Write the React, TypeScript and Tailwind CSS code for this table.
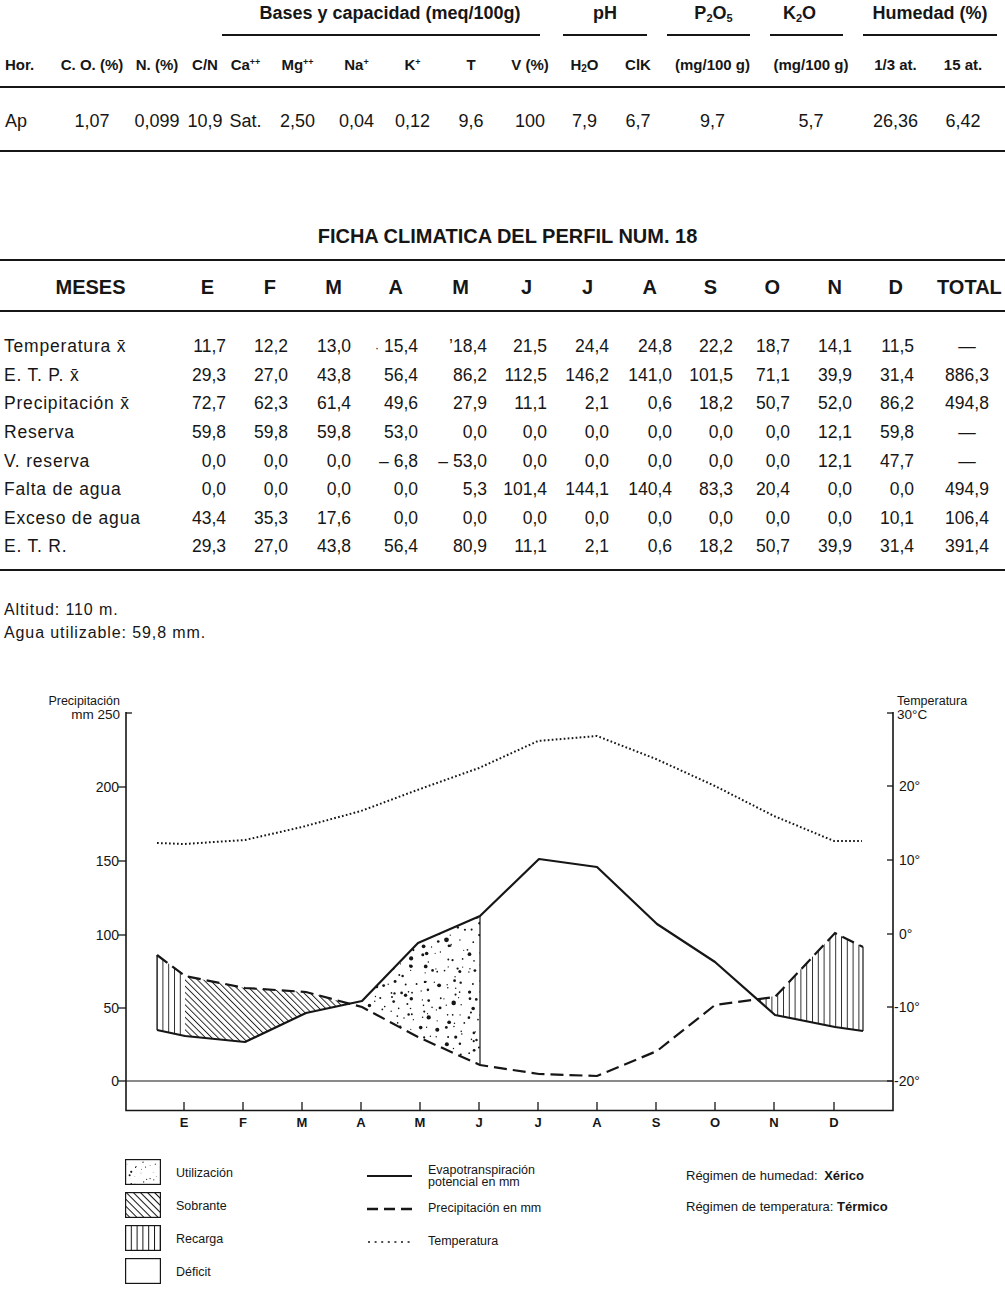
import React from "react";

type Pt = [number, number];

const ink = "#161616";
const pts = (a: Pt[]) => a.map((p) => p.join(",")).join(" ");

// chart traces, in page pixels (the svg viewBox starts at y=690)
const etp: Pt[] = [
  [157, 1031], [185, 1037], [245, 1043], [306, 1014], [362, 1002], [418, 944], [480, 917],
  [539, 860], [597, 868], [657, 925], [715, 963], [775, 1016], [835, 1028], [863, 1032],
];
const pre: Pt[] = [
  [157, 956], [185, 977], [245, 989], [306, 993], [362, 1008], [418, 1038], [480, 1066],
  [539, 1075], [597, 1077], [657, 1052], [715, 1006], [775, 998], [835, 934], [863, 948],
];
const temp: Pt[] = [
  [157, 844], [184, 845], [245, 841], [302, 828], [361, 812], [420, 790], [479, 769],
  [538, 742], [597, 737], [656, 760], [715, 787], [774, 817], [834, 842], [862, 842],
];

const usoArea: Pt[] = [[350, 1005], [362, 1002], [418, 944], [480, 917], [480, 1066], [418, 1038], [362, 1008]];
const sobranteArea: Pt[] = [[185, 977], [245, 989], [306, 993], [350, 1005], [306, 1014], [245, 1043], [185, 1037]];
const recargaIzq: Pt[] = [[157, 956], [185, 977], [185, 1037], [157, 1031]];
const recargaDer: Pt[] = [[757, 1000], [775, 997], [835, 934], [863, 948], [863, 1032], [835, 1028], [775, 1016]];

const months = ["E", "F", "M", "A", "M", "J", "J", "A", "S", "O", "N", "D"];
const tickX = [184, 243, 302, 361, 420, 479, 538, 597, 656, 715, 774, 834];

function jitterDots(x0: number, y0: number, x1: number, y1: number, step: number, seed: number) {
  let s = seed;
  const rnd = () => {
    s = (s * 16807) % 2147483647;
    return s / 2147483647;
  };
  const out: { x: number; y: number; r: number }[] = [];
  for (let y = y0; y < y1; y += step)
    for (let x = x0; x < x1; x += step)
      out.push({ x: x + rnd() * step, y: y + rnd() * step, r: 0.6 + rnd() * rnd() * 1.9 });
  return out;
}

const usoDots = jitterDots(346, 914, 482, 1068, 8, 4242);
const swatchDots = jitterDots(2, 2, 34, 24, 6, 977);

const soilGrid =
  "grid grid-cols-[56px_72px_58px_38px_43px_61px_57px_55px_62px_56px_53px_54px_95px_102px_67px_68px]";

const soilHeads: React.ReactNode[] = [
  "Hor.",
  "C. O. (%)",
  "N. (%)",
  "C/N",
  <>Ca<sup className="text-[9px]">++</sup></>,
  <>Mg<sup className="text-[9px]">++</sup></>,
  <>Na<sup className="text-[9px]">+</sup></>,
  <>K<sup className="text-[9px]">+</sup></>,
  "T",
  "V (%)",
  <>H<sub className="text-[10px]">2</sub>O</>,
  "ClK",
  "(mg/100 g)",
  "(mg/100 g)",
  "1/3 at.",
  "15 at.",
];

const soilData = ["Ap", "1,07", "0,099", "10,9", "Sat.", "2,50", "0,04", "0,12", "9,6", "100", "7,9", "6,7", "9,7", "5,7", "26,36", "6,42"];

function SoilTable() {
  return (
    <section>
      <div className={`${soilGrid} h-[36px] text-[18px] font-bold leading-[26px]`}>
        <div className="col-start-5 col-span-6 -ml-[2px] mr-[18px] border-b-2 border-[#161616] pl-[18px] text-center">
          Bases y capacidad (meq/100g)
        </div>
        <div className="col-span-2 ml-[5px] mr-[18px] border-b-2 border-[#161616] text-center">pH</div>
        <div className="ml-[2px] mr-[10px] border-b-2 border-[#161616] pl-[10px] text-center">
          P<sub className="text-[11px]">2</sub>O<sub className="text-[11px]">5</sub>
        </div>
        <div className="ml-[10px] mr-[19px] border-b-2 border-[#161616] pr-[14px] text-center">
          K<sub className="text-[11px]">2</sub>O
        </div>
        <div className="col-span-2 ml-[1px] border-b-2 border-[#161616] text-center">Humedad (%)</div>
      </div>

      <div className={`${soilGrid} h-[52px] items-center border-b-2 border-[#161616] pt-[8px] text-[15px] font-bold`}>
        {soilHeads.map((h, i) => (
          <div key={i} className={i === 0 ? "pl-[5px] text-left" : "text-center"}>
            {h}
          </div>
        ))}
      </div>

      <div className={`${soilGrid} h-[64px] items-center border-b-2 border-[#161616] pt-[4px] text-[18px]`}>
        {soilData.map((d, i) => (
          <div key={i} className={i === 0 ? "pl-[5px] text-left" : "text-center"}>
            {d}
          </div>
        ))}
      </div>
    </section>
  );
}

const climaGrid =
  "grid grid-cols-[165px_62px_62px_63px_67px_69px_60px_62px_63px_61px_57px_62px_62px_90px]";

const headPad = [
  "pr-[13px]", "pr-[13px]", "pr-[10px]", "pr-[16px]", "pr-[19px]", "pr-[16px]",
  "pr-[17px]", "pr-[16px]", "pr-[17px]", "pr-[11px]", "pr-[11px]", "pr-[12px]",
];

const climaRows: [string, React.ReactNode[], string][] = [
  ["Temperatura x\u0304", ["11,7", "12,2", "13,0", <><span className="text-[12px]">·</span> 15,4</>, "\u201918,4", "21,5", "24,4", "24,8", "22,2", "18,7", "14,1", "11,5"], "—"],
  ["E. T. P. x\u0304", ["29,3", "27,0", "43,8", "56,4", "86,2", "112,5", "146,2", "141,0", "101,5", "71,1", "39,9", "31,4"], "886,3"],
  ["Precipitación x\u0304", ["72,7", "62,3", "61,4", "49,6", "27,9", "11,1", "2,1", "0,6", "18,2", "50,7", "52,0", "86,2"], "494,8"],
  ["Reserva", ["59,8", "59,8", "59,8", "53,0", "0,0", "0,0", "0,0", "0,0", "0,0", "0,0", "12,1", "59,8"], "—"],
  ["V. reserva", ["0,0", "0,0", "0,0", "– 6,8", "– 53,0", "0,0", "0,0", "0,0", "0,0", "0,0", "12,1", "47,7"], "—"],
  ["Falta de agua", ["0,0", "0,0", "0,0", "0,0", "5,3", "101,4", "144,1", "140,4", "83,3", "20,4", "0,0", "0,0"], "494,9"],
  ["Exceso de agua", ["43,4", "35,3", "17,6", "0,0", "0,0", "0,0", "0,0", "0,0", "0,0", "0,0", "0,0", "10,1"], "106,4"],
  ["E. T. R.", ["29,3", "27,0", "43,8", "56,4", "80,9", "11,1", "2,1", "0,6", "18,2", "50,7", "39,9", "31,4"], "391,4"],
];

function ClimateTable() {
  return (
    <section>
      <h2 className="mt-[72px] pl-[10px] text-center text-[20px] font-bold leading-[24px]">
        FICHA CLIMATICA DEL PERFIL NUM. 18
      </h2>
      <div className={`${climaGrid} mt-[11px] h-[53px] items-center border-y-2 border-[#161616] pt-[3px] text-[20px] font-bold`}>
        <div className="pl-[16px] text-center">MESES</div>
        {months.map((m, i) => (
          <div key={i} className={`text-right ${headPad[i]}`}>
            {m}
          </div>
        ))}
        <div className="pl-[22px] pr-[8px] text-center">TOTAL</div>
      </div>
      <div className="border-b-2 border-[#161616] pb-[8px] pt-[20px] text-[17.5px]">
        {climaRows.map(([label, vals, total]) => (
          <div key={label} className={`${climaGrid} h-[28.6px] items-center`}>
            <div className="pl-[4px] tracking-[0.8px]">{label}</div>
            {vals.map((v, i) => (
              <div key={i} className="pr-[1px] text-right">
                {v}
              </div>
            ))}
            <div className="pl-[22px] pr-[8px] text-center">{total}</div>
          </div>
        ))}
      </div>
    </section>
  );
}

function Chart() {
  return (
    <svg className="mt-[45px] block" width="1005" height="445" viewBox="0 690 1005 445">
      <defs>
        <pattern id="vlines" width="5.8" height="10" patternUnits="userSpaceOnUse">
          <line x1="0.5" y1="0" x2="0.5" y2="10" stroke={ink} strokeWidth="0.9" />
        </pattern>
        <pattern id="diag" width="4.4" height="10" patternUnits="userSpaceOnUse" patternTransform="rotate(-45)">
          <line x1="0.5" y1="0" x2="0.5" y2="10" stroke={ink} strokeWidth="0.9" />
        </pattern>
        <clipPath id="usoClip">
          <polygon points={pts(usoArea)} />
        </clipPath>
      </defs>

      {/* hatched areas */}
      <polygon points={pts(recargaIzq)} fill="url(#vlines)" />
      <polygon points={pts(sobranteArea)} fill="url(#diag)" />
      <polygon points={pts(recargaDer)} fill="url(#vlines)" />
      <g clipPath="url(#usoClip)" fill={ink}>
        {usoDots.map((d, i) => (
          <circle key={i} cx={d.x} cy={d.y} r={d.r} />
        ))}
      </g>
      <line x1="157" y1="956" x2="157" y2="1031" stroke={ink} strokeWidth="1.2" />
      <line x1="480" y1="917" x2="480" y2="1066" stroke={ink} strokeWidth="1.2" />
      <line x1="863" y1="948" x2="863" y2="1032" stroke={ink} strokeWidth="1.2" />

      {/* axes */}
      <g stroke={ink} fill="none">
        <polyline points="126,713 126,1111.5 893,1111.5 893,713" strokeWidth="1.6" />
        <line x1="126" y1="1082" x2="893" y2="1082" strokeWidth="1.1" />
        <line x1="126" y1="714" x2="132" y2="714" strokeWidth="1.3" />
        {[788, 862, 936, 1009, 1082].map((y) => (
          <line key={y} x1="118" y1={y} x2="126" y2={y} strokeWidth="1.3" />
        ))}
        {[714, 787, 861, 935, 1008, 1082].map((y) => (
          <line key={y} x1="887" y1={y} x2="893" y2={y} strokeWidth="1.3" />
        ))}
        {tickX.map((x, i) => (
          <line key={i} x1={x} y1="1103" x2={x} y2="1111" strokeWidth="1.3" />
        ))}
      </g>

      {/* series */}
      <polyline points={pts(temp)} fill="none" stroke={ink} strokeWidth="2" strokeDasharray="1.7 2.3" />
      <polyline points={pts(etp)} fill="none" stroke={ink} strokeWidth="2.2" strokeLinejoin="round" />
      <polyline points={pts(pre)} fill="none" stroke={ink} strokeWidth="2.2" strokeDasharray="13 6" />

      {/* labels */}
      <g fill={ink}>
        <text x="120" y="706" textAnchor="end" fontSize="12.5">Precipitación</text>
        <text x="120" y="720" textAnchor="end" fontSize="13.5">mm 250</text>
        {[
          ["200", 788],
          ["150", 862],
          ["100", 936],
          ["50", 1009],
          ["0", 1082],
        ].map(([t, y]) => (
          <text key={t} x="119" y={Number(y) + 5} textAnchor="end" fontSize="14">
            {t}
          </text>
        ))}
        <text x="897" y="706" fontSize="12.5">Temperatura</text>
        <text x="897" y="720" fontSize="13.5">30°C</text>
        <text x="899" y="792" fontSize="14">20°</text>
        <text x="899" y="866" fontSize="14">10°</text>
        <text x="899" y="940" fontSize="14">0°</text>
        <text x="894" y="1013" fontSize="14">-10°</text>
        <text x="894" y="1087" fontSize="14">-20°</text>
        {months.map((m, i) => (
          <text key={i} x={tickX[i]} y="1128" textAnchor="middle" fontSize="13" fontWeight="bold">
            {m}
          </text>
        ))}
      </g>
    </svg>
  );
}

function Swatch({ kind }: { kind: "uso" | "sobrante" | "recarga" | "deficit" }) {
  return (
    <svg width="36" height="26" viewBox="0 0 36 26" className="block shrink-0">
      <defs>
        <pattern id="sw-v" width="5.8" height="10" patternUnits="userSpaceOnUse">
          <line x1="0.5" y1="0" x2="0.5" y2="10" stroke={ink} strokeWidth="1" />
        </pattern>
        <pattern id="sw-d" width="5" height="10" patternUnits="userSpaceOnUse" patternTransform="rotate(-45)">
          <line x1="0.5" y1="0" x2="0.5" y2="10" stroke={ink} strokeWidth="1" />
        </pattern>
      </defs>
      {kind === "recarga" && <rect x="0.5" y="0.5" width="35" height="25" fill="url(#sw-v)" />}
      {kind === "sobrante" && <rect x="0.5" y="0.5" width="35" height="25" fill="url(#sw-d)" />}
      {kind === "uso" && (
        <g fill={ink}>
          {swatchDots.map((d, i) => (
            <circle key={i} cx={d.x} cy={d.y} r={d.r * 0.55} />
          ))}
        </g>
      )}
      <rect x="0.6" y="0.6" width="34.8" height="24.8" fill="none" stroke={ink} strokeWidth="1.2" />
    </svg>
  );
}

function Legend() {
  const boxes: [React.ComponentProps<typeof Swatch>["kind"], string][] = [
    ["uso", "Utilización"],
    ["sobrante", "Sobrante"],
    ["recarga", "Recarga"],
    ["deficit", "Déficit"],
  ];
  return (
    <div className="mt-[25px] flex pb-[10px] pl-[125px]">
      <div className="flex w-[242px] flex-col gap-[7px]">
        {boxes.map(([k, label]) => (
          <div key={k} className="flex h-[26px] items-center gap-[15px]">
            <Swatch kind={k} />
            <span className="pt-[4px] text-[12.5px]">{label}</span>
          </div>
        ))}
      </div>

      <div className="flex w-[319px] flex-col gap-[7px] pt-[4px] text-[12.5px]">
        <div className="flex h-[26px] items-center gap-[16px]">
          <svg width="45" height="6" className="block shrink-0">
            <line x1="0" y1="3" x2="45" y2="3" stroke={ink} strokeWidth="2" />
          </svg>
          <span className="leading-[12px]">
            Evapotranspiración
            <br />
            potencial en mm
          </span>
        </div>
        <div className="flex h-[26px] items-center gap-[16px]">
          <svg width="45" height="6" className="block shrink-0">
            <line x1="0" y1="3" x2="45" y2="3" stroke={ink} strokeWidth="2.4" strokeDasharray="11 6" />
          </svg>
          <span>Precipitación en mm</span>
        </div>
        <div className="flex h-[26px] items-center gap-[16px]">
          <svg width="45" height="6" className="block shrink-0">
            <line x1="1" y1="3" x2="45" y2="3" stroke={ink} strokeWidth="1.6" strokeDasharray="2 4.6" />
          </svg>
          <span>Temperatura</span>
        </div>
      </div>

      <div className="flex flex-col gap-[12px] pt-[7px] text-[13px] leading-[19px]">
        <p>
          Régimen de humedad: <b className="ml-[3px]">Xérico</b>
        </p>
        <p>
          Régimen de temperatura: <b>Térmico</b>
        </p>
      </div>
    </div>
  );
}

export default function App() {
  return (
    <div className="w-[1005px] bg-white font-['Liberation_Sans',Arial,sans-serif] text-[#161616]">
      <SoilTable />
      <ClimateTable />
      <div className="mt-[27px] pl-[4px] text-[16px] leading-[23px] tracking-[0.9px]">
        <p>Altitud: 110 m.</p>
        <p>Agua utilizable: 59,8 mm.</p>
      </div>
      <Chart />
      <Legend />
    </div>
  );
}
